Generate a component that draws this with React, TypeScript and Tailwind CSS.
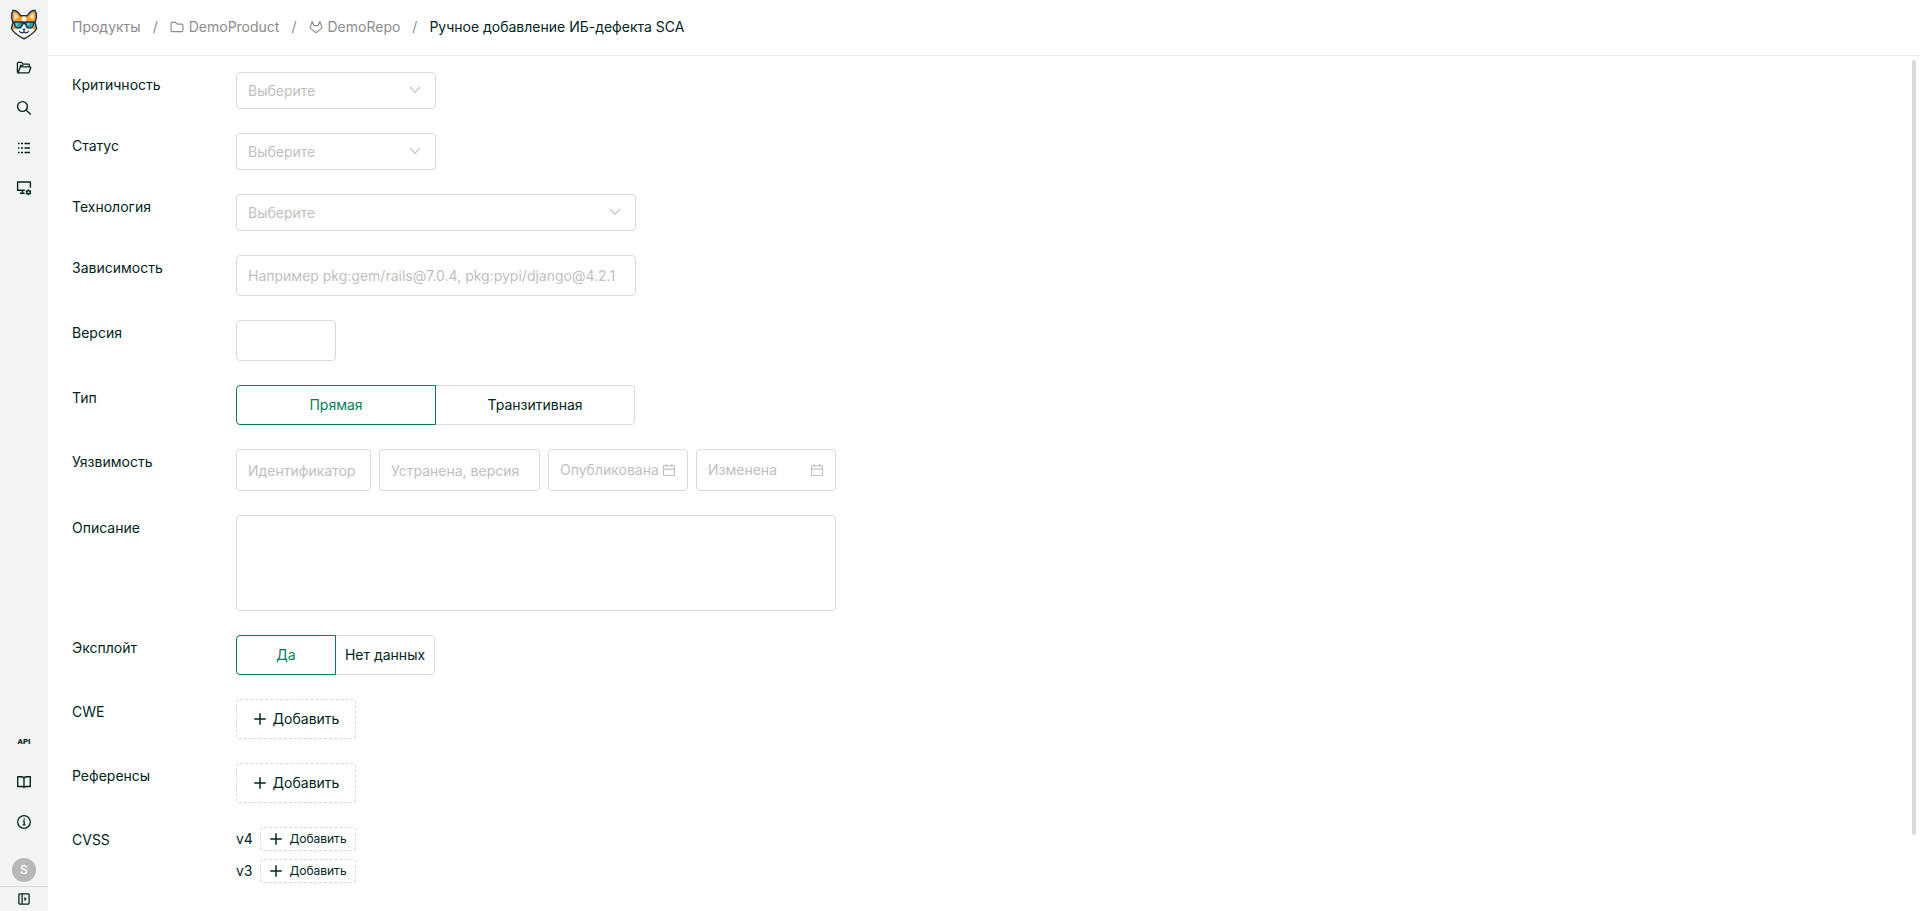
import React from "react";

const field =
  "rounded-[4px] border border-[#d9d9d9] bg-white px-[11px] text-sm text-[#00261c] placeholder:text-[#bfbfbf] outline-none focus:border-[#007f5b]";

function Logo() {
  return (
    <svg viewBox="0 0 28 32" className="h-8 w-7" aria-hidden="true">
      <path d="M3.200 2.200C1.200 5.500 1.200 10.500 3 14.500L1.400 20.500C3.500 25 8.500 28 14 30.800 19.500 28 24.500 25 26.600 20.500L25 14.500C26.800 10.500 26.800 5.500 24.800 2.200 21.800 2.400 19 4.600 17.400 7.800h-6.800C9 4.600 6.200 2.400 3.200 2.200Z" fill="#f7a02b" stroke="#17315c" strokeWidth="1.400" strokeLinejoin="round" />
      <path d="M4.400 5c-.6 2.600-.4 5 .5 7L8.600 8.800C7.500 7 6.200 5.600 4.400 5ZM23.600 5c.6 2.600.4 5-.5 7l-3.700-3.200c1.100-1.800 2.400-3.200 4.200-3.800Z" fill="#fdd9ae" />
      <path d="M12.400 8.500h3.200l.8 6.500 3.200 5 5.400 1.200C22.800 24.800 18.600 27.400 14 29.800 9.400 27.400 5.200 24.800 3 21.200L8.400 20l3.200-5Z" fill="#fffaf2" />
      <path d="M2.800 13.200h22.400v2l-1 .6c-.2 3.400-1.800 5-4.600 5-2.600 0-4.200-1.800-4.600-4.400h-2c-.4 2.600-2 4.400-4.600 4.400-2.800 0-4.400-1.600-4.600-5l-1-.6Z" fill="#17315c" />
      <path d="M4.800 14.800h7c-.2 2.900-1.400 4.700-3.600 4.700s-3.300-1.700-3.400-4.700ZM16.200 14.800h7c-.1 3-1.200 4.700-3.400 4.700s-3.400-1.800-3.600-4.700Z" fill="#1aa7a0" />
      <path d="M5.600 15.300h3l-2.200 2.600ZM17 15.300h3l-2.200 2.600Z" fill="#7fe0d2" />
      <path d="M12 20.800h4L14 23Z" fill="#17315c" />
      <path d="M9.600 23.200c1 2.200 3.400 2.200 4.400.4 1 1.800 3.400 1.800 4.400-.4M14 23v1" fill="none" stroke="#17315c" strokeWidth="1.200" strokeLinecap="round" />
    </svg>
  );
}

function Icon({ size = "h-4 w-4", width = 1.3, children }: { size?: string; width?: number; children: React.ReactNode }) {
  return (
    <svg viewBox="0 0 16 16" className={`${size} shrink-0`} fill="none" stroke="currentColor" strokeWidth={width} strokeLinejoin="round" aria-hidden="true">
      {children}
    </svg>
  );
}

const FolderOpenIcon = () => (
  <Icon>
    <path d="M3 12.800H2.200a.8.800 0 0 1-.8-.9V3.200c0-.5.300-.8.800-.8h3.300l1.700 1.700h5.300c.500 0 .800.300.800.800v1.800" />
    <path d="M2 12.700 4 7.600c.2-.5.500-.8 1-.8h9c.600 0 .9.400.700 1l-1.500 4.200c-.2.500-.5.800-1.100.8H2.200" />
    <path d="M4.400 7V5.300h3" />
  </Icon>
);

const SearchIcon = () => (
  <Icon width={1.4}>
    <circle cx="6.500" cy="6.500" r="4.900" />
    <path d="m10 10 4.800 4.500" />
  </Icon>
);

const ListIcon = () => (
  <Icon width={1.4}>
    <path d="M2 3.500h1.500M5 3.500h2M8.500 3.500H14M2 8h1.500M5 8h2M8.500 8H14M2 12.500h1.500M5 12.500h2M8.500 12.500H14" />
  </Icon>
);

const MonitorGearIcon = () => (
  <Icon width={1.4}>
    <path d="M8.800 10.300H1.600V2h12.800v5.800M6.500 10.300v2.700M4 13.200h4.600" />
    <circle cx="12.400" cy="12.300" r="1.700" width="1.500" />
    <path d="M12.400 9.300v1.500M12.400 13.800v1.500M9.800 10.800l1.300.8M13.700 13l1.300.8M9.800 13.800l1.300-.8M13.700 11.600l1.300-.8" />
  </Icon>
);

const BookIcon = () => (
  <Icon width={1.4}>
    <path d="M8 4v9M8 4c-.8-.9-1.500-1.200-2.500-1.200H1.700v9.700h4c1 0 1.700.200 2.300.8.600-.6 1.300-.8 2.300-.8h4V2.800h-3.800C9.500 2.800 8.800 3.100 8 4Z" />
  </Icon>
);

const InfoIcon = () => (
  <Icon>
    <circle cx="8" cy="8" r="6.300" />
    <path d="M6.800 7.200h1.400v3.400M6.600 10.900h2.900" />
    <circle cx="8.200" cy="5" r=".5" fill="currentColor" strokeWidth=".6" />
  </Icon>
);

const PanelIcon = () => (
  <Icon size="h-3 w-3" width={1.700}>
    <rect x="1.200" y="1.200" width="13.600" height="13.600" rx="1" />
    <path d="M5.500 1.500v13" />
    <path d="M8.500 5v6l3.200-3Z" fill="currentColor" stroke="none" />
  </Icon>
);

const FolderIcon = () => (
  <Icon size="h-3.5 w-3.5">
    <path d="M2.500 2.700h3.800l1.800 2h5.400c.8 0 1.300.5 1.300 1.300v6c0 .8-.5 1.300-1.300 1.300h-11c-.8 0-1.300-.5-1.300-1.300V4c0-.8.500-1.300 1.300-1.300Z" />
  </Icon>
);

const GitlabIcon = () => (
  <Icon size="h-3.5 w-3.5">
    <path d="M3.600 1.700 1.400 8.200c-.2.700 0 1.300.5 1.700L8 14.600l6.100-4.700c.5-.4.700-1 .5-1.700L12.400 1.700 10.300 6.500H5.700Z" />
  </Icon>
);

const ChevronIcon = () => (
  <Icon size="h-3.5 w-3.5">
    <path d="m2.300 4.500 5.700 6.300 5.700-6.300" />
  </Icon>
);

const CalendarIcon = () => (
  <Icon size="h-3.5 w-3.5" width={1.200}>
    <path d="M1.700 3.200h12.600v11H1.700ZM1.700 7h12.600M4.800 1v3.600M11.200 1v3.600" />
  </Icon>
);

const PlusIcon = () => (
  <Icon size="h-3.5 w-3.5" width={1.700}>
    <path d="M8 1.500v13M1.500 8h13" />
  </Icon>
);

function NavItem({ label, children }: { label: string; children: React.ReactNode }) {
  return (
    <a href="#" aria-label={label} className="flex h-10 w-12 items-center justify-center">
      {children}
    </a>
  );
}

function Sidebar() {
  return (
    <nav className="flex w-12 shrink-0 flex-col items-center bg-[#f3f5f4] text-[#00261c]">
      <a href="#" aria-label="Главная" className="flex h-12 items-center justify-center">
        <Logo />
      </a>
      <NavItem label="Продукты"><FolderOpenIcon /></NavItem>
      <NavItem label="Поиск"><SearchIcon /></NavItem>
      <NavItem label="Список"><ListIcon /></NavItem>
      <NavItem label="Настройки"><MonitorGearIcon /></NavItem>
      <div className="mt-auto flex flex-col items-center">
        <a href="#" className="flex h-10 w-12 items-center justify-center font-[Roboto,sans-serif] text-[8px] font-black">API</a>
        <NavItem label="Документация"><BookIcon /></NavItem>
        <NavItem label="О системе"><InfoIcon /></NavItem>
      </div>
      <button type="button" className="mt-4 mb-1 flex h-6 w-6 items-center justify-center rounded-full bg-[#b8b8b8] text-xs font-medium text-white">
        S
      </button>
      <button type="button" aria-label="Развернуть меню" className="flex h-[25px] w-full items-center justify-center border-t border-[#d5d8d7]">
        <PanelIcon />
      </button>
    </nav>
  );
}

function Row({ label, htmlFor, children }: { label: string; htmlFor?: string; children: React.ReactNode }) {
  return (
    <div className="flex items-start">
      {htmlFor ? (
        <label htmlFor={htmlFor} className="w-41 shrink-0 pt-[2px] leading-[22px]">{label}</label>
      ) : (
        <span className="w-41 shrink-0 pt-[2px] leading-[22px]">{label}</span>
      )}
      {children}
    </div>
  );
}

function Select({ id, wide }: { id: string; wide?: boolean }) {
  return (
    <div className={wide ? "relative w-100" : "relative w-50"}>
      <select id={id} defaultValue="" className="block h-[37px] w-full appearance-none rounded-[4px] border border-[#d9d9d9] bg-white px-[11px] text-sm text-[#bfbfbf] outline-none">
        <option value="">Выберите</option>
      </select>
      <span className="pointer-events-none absolute top-[11px] right-3.5 text-[#bfbfbf]"><ChevronIcon /></span>
    </div>
  );
}

function Segmented({ options, wide }: { options: [string, string]; wide?: boolean }) {
  const size = wide ? "w-50" : "w-25";
  return (
    <div className="flex h-10">
      <button type="button" aria-pressed="true" className={`${size} relative z-10 rounded-l-[4px] border border-[#007f5b] bg-white text-[#007f5b]`}>
        {options[0]}
      </button>
      <button type="button" aria-pressed="false" className={`${size} -ml-px rounded-r-[4px] border border-[#d9d9d9] bg-white whitespace-nowrap`}>
        {options[1]}
      </button>
    </div>
  );
}

function DateField({ label }: { label: string }) {
  return (
    <div className="relative w-35">
      <input aria-label={label} placeholder={label} className={`${field} h-[42px] w-full pb-[2px]`} />
      <span className="pointer-events-none absolute top-3.5 right-3 text-[#bfbfbf]"><CalendarIcon /></span>
    </div>
  );
}

function AddButton({ small }: { small?: boolean }) {
  return (
    <button
      type="button"
      className={
        small
          ? "flex h-6 w-24 items-center justify-center gap-1.5 rounded-[4px] border border-dashed border-[#d9d9d9] text-xs shadow-[0_2px_0_rgba(0,0,0,0.02)]"
          : "flex h-10 w-30 items-center justify-center gap-1.5 rounded-[4px] border border-dashed border-[#d9d9d9] shadow-[0_2px_0_rgba(0,0,0,0.02)]"
      }
    >
      <PlusIcon />
      Добавить
    </button>
  );
}

function Slash() {
  return <span className="mx-3 text-[#8c8c8c]">/</span>;
}

export default function App() {
  return (
    <div className="flex min-h-screen bg-white font-['Inter',sans-serif] text-sm text-[#00261c]">
      <Sidebar />
      <main className="min-w-0 flex-1">
        <header className="flex h-14 items-center border-b border-[#ececec] px-6 pb-px text-[#8c8c8c]">
          <a href="#">Продукты</a>
          <Slash />
          <a href="#" className="flex items-center gap-[5px]"><FolderIcon />DemoProduct</a>
          <Slash />
          <a href="#" className="flex items-center gap-[5px]"><GitlabIcon />DemoRepo</a>
          <Slash />
          <span className="text-[#00261c]">Ручное добавление ИБ-дефекта SCA</span>
        </header>
        <div className="flex items-start justify-between pt-1 pr-1">
          <form className="flex flex-col gap-6 pt-3 pl-6">
            <Row label="Критичность" htmlFor="severity"><Select id="severity" /></Row>
            <Row label="Статус" htmlFor="status"><Select id="status" /></Row>
            <Row label="Технология" htmlFor="technology"><Select id="technology" wide /></Row>
            <Row label="Зависимость" htmlFor="dependency">
              <input id="dependency" placeholder="Например pkg:gem/rails@7.0.4, pkg:pypi/django@4.2.1" className={`${field} h-[41px] w-100`} />
            </Row>
            <Row label="Версия" htmlFor="version">
              <input id="version" className={`${field} h-[41px] w-25`} />
            </Row>
            <Row label="Тип"><Segmented options={["Прямая", "Транзитивная"]} wide /></Row>
            <Row label="Уязвимость" htmlFor="vulnerability">
              <div className="flex gap-2">
                <input id="vulnerability" placeholder="Идентификатор" className={`${field} h-[42px] w-[135px]`} />
                <input aria-label="Устранена, версия" placeholder="Устранена, версия" className={`${field} h-[42px] w-[161px]`} />
                <DateField label="Опубликована" />
                <DateField label="Изменена" />
              </div>
            </Row>
            <Row label="Описание" htmlFor="description">
              <textarea id="description" className={`${field} block h-24 w-150 resize-none py-2`} />
            </Row>
            <Row label="Эксплойт"><Segmented options={["Да", "Нет данных"]} /></Row>
            <Row label="CWE"><AddButton /></Row>
            <Row label="Референсы"><AddButton /></Row>
            <Row label="CVSS">
              <div className="flex flex-col gap-2">
                <div className="flex items-center"><span className="w-6 leading-[22px]">v4</span><AddButton small /></div>
                <div className="flex items-center"><span className="w-6 leading-[22px]">v3</span><AddButton small /></div>
              </div>
            </Row>
          </form>
          <div className="h-[775px] w-1 rounded-sm bg-[#d9d9d9]" />
        </div>
      </main>
    </div>
  );
}
